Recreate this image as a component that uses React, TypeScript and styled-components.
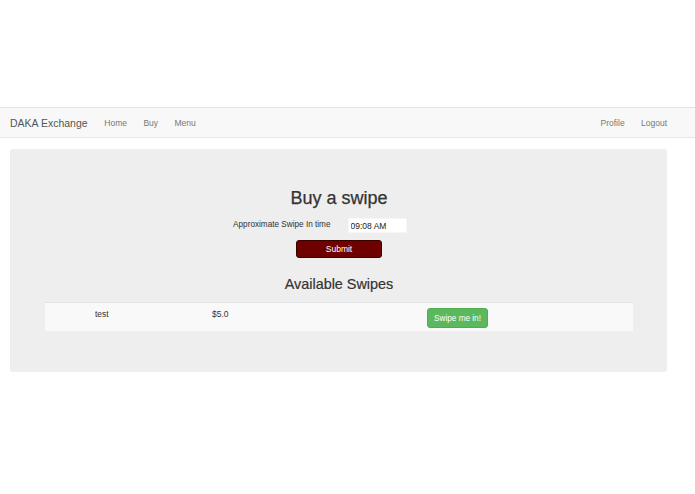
import React from 'react';
import styled, { createGlobalStyle } from 'styled-components';

const GlobalStyle = createGlobalStyle`
  html, body {
    margin: 0;
    padding: 0;
    background: #fff;
  }
  body {
    font-family: "Liberation Sans", Arial, Helvetica, sans-serif;
    color: #333;
  }
`;

const swipes = [
  { id: 1, name: 'test', price: '$5.0' }
];

const App = () => {
  return (
    <>
      <GlobalStyle />
      <Page>
        <Navbar>
          <NavGroup>
            <Brand>DAKA Exchange</Brand>
            <NavLink>Home</NavLink>
            <NavLink>Buy</NavLink>
            <NavLink>Menu</NavLink>
          </NavGroup>
          <NavGroup>
            <NavLink>Profile</NavLink>
            <NavLink last>Logout</NavLink>
          </NavGroup>
        </Navbar>
        <Container>
          <Jumbotron>
            <Title>Buy a swipe</Title>
            <FormRow>
              <Label>Approximate Swipe In time</Label>
              <TimeInput type="text" value="09:08 AM" readOnly />
            </FormRow>
            <SubmitButton>Submit</SubmitButton>
            <SubTitle>Available Swipes</SubTitle>
            <Table>
              {swipes.map(item => (
                <Row key={item.id}>
                  <Cell>{item.name}</Cell>
                  <Cell>{item.price}</Cell>
                  <Cell>
                    <SwipeButton>Swipe me in!</SwipeButton>
                  </Cell>
                </Row>
              ))}
            </Table>
          </Jumbotron>
        </Container>
      </Page>
    </>
  );
};

const Page = styled.div`
  padding-top: 107px;
  min-height: 494px;
  box-sizing: border-box;
`;

const Navbar = styled.nav`
  height: 31px;
  box-sizing: border-box;
  background-color: #f8f8f8;
  border-top: 1px solid #e3e3e3;
  border-bottom: 1px solid #e7e7e7;
  display: flex;
  justify-content: space-between;
  align-items: center;
  padding: 0 28px 0 10px;
`;

const NavGroup = styled.div`
  display: flex;
  align-items: center;
`;

const Brand = styled.span`
  font-size: 10.5px;
  color: #555;
  margin-right: 8.5px;
`;

const NavLink = styled.span<{ last?: boolean }>`
  font-size: 8.5px;
  color: #777;
  padding: 0 ${({ last }) => (last ? '0' : '8.2px')} 0 8.2px;
`;

const Container = styled.div`
  padding: 11px 28px 0 10px;
`;

const Jumbotron = styled.div`
  background-color: #eee;
  border-radius: 3px;
  padding: 39px 34px 41px 35px;
  display: flex;
  flex-direction: column;
  align-items: center;
`;

const Title = styled.h1`
  margin: 0;
  font-size: 18px;
  line-height: 20px;
  font-weight: normal;
  color: #333;
  -webkit-text-stroke: 0.25px #333;
`;

const FormRow = styled.div`
  display: grid;
  grid-template-columns: 1fr 1fr;
  column-gap: 17px;
  align-items: center;
  width: 100%;
  margin-top: 10px;
`;

const Label = styled.label`
  justify-self: end;
  font-size: 8.2px;
  color: #333;
  margin-bottom: 2px;
`;

const TimeInput = styled.input`
  justify-self: start;
  width: 59px;
  height: 15px;
  box-sizing: border-box;
  border: 1px solid #f6f6f6;
  background: #fff;
  font-family: "Liberation Sans", Arial, sans-serif;
  font-size: 8.5px;
  color: #222;
  padding: 0 2px;
  outline: none;
`;

const SubmitButton = styled.button`
  margin-top: 7px;
  width: 86px;
  height: 18px;
  box-sizing: border-box;
  background-color: #6e0000;
  border: 1px solid #3d0000;
  border-radius: 3px;
  color: #fff;
  font-family: "Liberation Sans", Arial, sans-serif;
  font-size: 8.5px;
  padding: 0;
`;

const SubTitle = styled.h3`
  margin: 18px 0 0;
  font-size: 14.4px;
  line-height: 16px;
  font-weight: normal;
  color: #333;
  -webkit-text-stroke: 0.2px #333;
`;

const Table = styled.div`
  width: 100%;
  margin-top: 10px;
`;

const Row = styled.div`
  display: grid;
  grid-template-columns: 117px 215px 1fr;
  align-items: start;
  height: 29px;
  box-sizing: border-box;
  padding: 5px 0 0 50px;
  background-color: #f9f9f9;
  border-top: 1px solid #e4e4e4;
`;

const Cell = styled.div`
  font-size: 8.5px;
  line-height: 12px;
  color: #333;
`;

const SwipeButton = styled.button`
  width: 61px;
  height: 20px;
  box-sizing: border-box;
  background-color: #5cb85c;
  border: 1px solid #4cae4c;
  border-radius: 3px;
  color: #fff;
  font-family: "Liberation Sans", Arial, sans-serif;
  font-size: 8.2px;
  padding: 0;
`;

export default App;
